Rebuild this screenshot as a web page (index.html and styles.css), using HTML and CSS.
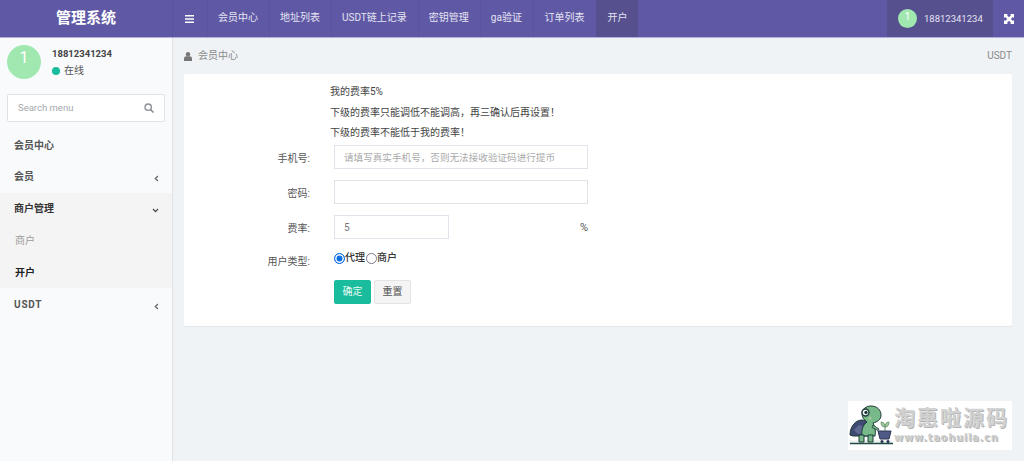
FILE: index.html
```html
<!DOCTYPE html>
<html lang="zh-CN">
<head>
<meta charset="utf-8">
<title>管理系统</title>
<link rel="stylesheet" href="styles.css">
</head>
<body>
<header class="topbar">
  <div class="brand">管理系统</div>
  <nav class="topnav">
    <a class="nav-item toggle"><svg width="10" height="8" viewBox="0 0 10 8"><path d="M0 0h9v1.600H0zM0 3.200h9v1.600H0zM0 6.400h9V8H0z" fill="#fff"/></svg></a>
    <a class="nav-item">会员中心</a>
    <a class="nav-item">地址列表</a>
    <a class="nav-item">USDT链上记录</a>
    <a class="nav-item">密钥管理</a>
    <a class="nav-item wide">ga验证</a>
    <a class="nav-item wide">订单列表</a>
    <a class="nav-item active">开户</a>
  </nav>
  <div class="top-right">
    <div class="user-menu"><span class="avatar-sm">1</span><span class="num">18812341234</span></div>
    <a class="expand"><svg width="10" height="10" viewBox="0 0 10 10"><path d="M0 0h4L2.900 1.100 5 3.200 7.100 1.100 6 0h4v4L8.900 2.900 6.800 5l2.100 2.100L10 6v4H6l1.100-1.100L5 6.800 2.900 8.900 4 10H0V6l1.100 1.100L3.200 5 1.100 2.900 0 4z" fill="#fff"/></svg></a>
  </div>
</header>
<div class="layout">
  <aside class="sidebar">
    <div class="user-panel">
      <div class="avatar-lg">1</div>
      <div class="user-info">
        <div class="user-name num">18812341234</div>
        <div class="user-status"><i class="dot"></i>在线</div>
      </div>
    </div>
    <div class="search">
      <span>Search menu</span>
      <svg width="10" height="10" viewBox="0 0 10 10"><circle cx="4.200" cy="4.200" r="3.200" fill="none" stroke="#8a8f95" stroke-width="1.300"/><path d="M6.600 6.600 9.500 9.500" stroke="#8a8f95" stroke-width="1.500"/></svg>
    </div>
    <ul class="menu">
      <li class="menu-row first"><span>会员中心</span></li>
      <li class="menu-row"><span>会员</span><svg class="chev" width="5" height="7" viewBox="0 0 5 7"><path d="M4 1 1.300 3.500 4 6" fill="none" stroke="#666" stroke-width="1.200"/></svg></li>
      <li class="menu-open">
        <div class="menu-row strong"><span>商户管理</span><svg class="chev" width="7" height="5" viewBox="0 0 7 5"><path d="M1 1 3.500 3.700 6 1" fill="none" stroke="#444" stroke-width="1.200"/></svg></div>
        <div class="sub">商户</div>
        <div class="sub current">开户</div>
      </li>
      <li class="menu-row"><span class="latin">USDT</span><svg class="chev" width="5" height="7" viewBox="0 0 5 7"><path d="M4 1 1.300 3.500 4 6" fill="none" stroke="#666" stroke-width="1.200"/></svg></li>
    </ul>
  </aside>
  <main class="content">
    <div class="crumbs">
      <span class="crumb"><svg width="8" height="9" viewBox="0 0 8 9"><circle cx="4" cy="2.200" r="2.200" fill="#777"/><path d="M0 9V6.500C0 5 1.200 4.300 2.200 4.300h3.600C6.800 4.300 8 5 8 6.500V9z" fill="#777"/></svg>会员中心</span>
      <span>USDT</span>
    </div>
    <section class="card">
      <div class="notes">
        <p>我的费率5%</p>
        <p>下级的费率只能调低不能调高，再三确认后再设置！</p>
        <p>下级的费率不能低于我的费率！</p>
      </div>
      <form class="form">
        <div class="label">手机号:</div>
        <div class="field"><input class="input" type="text" placeholder="请填写真实手机号，否则无法接收验证码进行提币"></div>
        <div class="label">密码:</div>
        <div class="field"><input class="input" type="text"></div>
        <div class="label">费率:</div>
        <div class="field rate"><input class="input short" type="text" value="5"><span class="pct">%</span></div>
        <div class="label type-label">用户类型:</div>
        <div class="field radios">
          <label class="radio-label"><span class="radio on"></span>代理</label>
          <label class="radio-label"><span class="radio"></span>商户</label>
        </div>
        <div></div>
        <div class="actions">
          <button class="btn primary" type="button">确定</button>
          <button class="btn" type="button">重置</button>
        </div>
      </form>
    </section>
  </main>
</div>
<div class="watermark">
  <svg class="wm-logo" width="46" height="44" viewBox="2 2 46 44">
    <path d="M3 38 L46 38 46 42 3 42z" fill="#eef2f0"/>
    <path d="M4 41.500h43" stroke="#1f4a45" stroke-width="1.500"/>
    <path d="M4 33c0-9 6-15 12-15 5 0 9 5 9 11l-3 5-15 0z" fill="#3f4a72" stroke="#1f3a3a" stroke-width="1"/>
    <path d="M8 28l5-5 6 2 0 6-7 1z" fill="#5f6a92"/>
    <path d="M16 34c-1-6 1-11 5-14-3-2-5-5-5-8 0-5 4-8 9-8 6 0 10 4 10 9 0 5-4 7-8 8 2 4 3 8 2 13z" fill="#78b98a" stroke="#1f3a3a" stroke-width="1"/>
    <circle cx="19.500" cy="10.500" r="3.500" fill="#fff" stroke="#1f3a3a" stroke-width="1.400"/>
    <circle cx="20" cy="10.500" r="1.700" fill="#1f3a3a"/>
    <circle cx="24" cy="16" r="1.500" fill="#a8c9a0"/>
    <path d="M27 23l6 4-1 1.500-6-3z" fill="#78b98a" stroke="#1f3a3a" stroke-width=".8"/>
    <path d="M13 33h5v7h-5zM22 33h5v7h-5z" fill="#78b98a" stroke="#1f3a3a" stroke-width="1"/>
    <path d="M32 29h13l-2 8H34z" fill="#4f5a86" stroke="#2c3454" stroke-width="1"/>
    <path d="M39 29v-4" stroke="#5f8f6a" stroke-width="1"/>
    <path d="M39 25c-3 0-4-2-4-5 3 0 4 2 4 5zM39 25c3 0 4-2 4-5-3 0-4 2-4 5z" fill="#a8c89a" stroke="#5f8f6a" stroke-width=".8"/>
    <circle cx="36" cy="39.500" r="1.500" fill="#2c3454"/><circle cx="42" cy="39.500" r="1.500" fill="#2c3454"/>
  </svg>
  <div class="wm-text">
    <div class="wm-cn">淘惠啦源码</div>
    <div class="wm-url">www.taohuila.cn</div>
  </div>
</div>
</body>
</html>
```
FILE: styles.css
```css
* { box-sizing: border-box; }
html, body { height: 100%; }
body {
  margin: 0;
  overflow: hidden;
  background: #eff3f6;
  color: #4a4a4a;
  font: 10px/1.4 Roboto, "Noto Sans CJK SC", sans-serif;
}
.num { font-size: 9.500px; }
.topbar {
  display: flex;
  height: 38px;
  background: #5f59a5;
  border-bottom: 1px solid #b3aedb;
  color: #e6e4f3;
}
.brand {
  width: 172px;
  flex: none;
  text-align: center;
  line-height: 37px;
  font-size: 15px;
  font-weight: 700;
  color: #fff;
}
.topnav { display: flex; height: 37px; }
.nav-item {
  display: flex;
  align-items: center;
  height: 37px;
  padding: 0 11px 1px 10px;
  border-left: 1px solid #5a549e;
  white-space: nowrap;
}
.toggle { padding: 0 12px; width: 35px; }
.wide { padding-right: 11.500px; }
.nav-item.wide + .wide { padding-right: 12px; }
.active { background: #56508f; padding-left: 11px; border-left: 0; }
.top-right { margin-left: auto; display: flex; }
.user-menu {
  display: flex;
  align-items: center;
  gap: 7px;
  width: 106px;
  padding-left: 11px;
  background: #56508f;
}
.avatar-sm {
  width: 19px;
  height: 19px;
  border-radius: 50%;
  background: #a0e8b0;
  color: #fff;
  text-align: center;
  line-height: 15px;
}
.expand { width: 31px; display: flex; align-items: center; justify-content: center; }
.layout { display: flex; height: 423px; }
.sidebar {
  width: 173px;
  flex: none;
  background: #f9fafc;
  border-right: 1px solid #dfe3e8;
}
.user-panel { display: flex; height: 56px; padding: 7px 0 0 7px; }
.avatar-lg {
  width: 34px;
  height: 34px;
  border-radius: 50%;
  background: #a0e8b0;
  color: #fff;
  font-size: 16px;
  text-align: center;
  line-height: 25px;
}
.user-info { margin-left: 11px; }
.user-name { font-weight: 700; color: #444; line-height: 17px; }
.user-status { display: flex; align-items: center; gap: 4px; line-height: 17px; font-size: 10px; color: #555; }
.dot { width: 8px; height: 8px; border-radius: 50%; background: #19bc9c; }
.search {
  display: flex;
  justify-content: space-between;
  align-items: center;
  width: 158px;
  height: 28px;
  margin-left: 7px;
  padding: 0 10px 0 10px;
  background: #fff;
  border: 1px solid #dfe3e8;
  border-radius: 2px;
  color: #a5a8ad;
  font-size: 9.500px;
}
.menu { list-style: none; margin: 7px 0 0; padding: 0; }
.menu-row {
  display: flex;
  justify-content: space-between;
  align-items: center;
  height: 32px;
  padding: 0 13px 1px 14px;
  font-weight: 600;
  color: #555;
}
.first { padding: 1px 13px 0 14px; }
.menu-open + .menu-row { padding-top: 1px; padding-bottom: 0; }
.menu .latin { letter-spacing: .8px; font-weight: 700; }
.chev { flex: none; margin-top: 3px; }
.menu-open { background: #f4f4f4; }
.strong { color: #333; font-weight: 700; }
.sub { height: 32px; line-height: 31px; padding-left: 15px; color: #9a9a9a; }
.sub.current { height: 31px; color: #222; font-weight: 700; }
.content { flex: 1; padding: 0 12px 0 11px; }
.crumbs {
  display: flex;
  justify-content: space-between;
  align-items: center;
  height: 36px;
  color: #8a8a8a;
}
.crumb { display: flex; align-items: center; gap: 6px; }
.card {
  height: 252px;
  background: #fff;
  border-radius: 2px;
  box-shadow: 0 1px 1px #e5e8ec;
  padding-top: 7px;
}
.notes { margin-left: 146px; color: #444; font-family: Roboto, "Noto Sans CJK TC", sans-serif; }
.notes p { margin: 0; height: 20.500px; line-height: 21px; }
.form {
  display: grid;
  grid-template-columns: 126px 254px;
  grid-template-rows: 35px 35px 35px 30px auto;
  column-gap: 24px;
  margin-top: 2.500px;
}
.label { text-align: right; line-height: 25px; color: #555; padding-top: 1px; }
.input {
  display: block;
  width: 100%;
  height: 24px;
  padding: 0 9px;
  border: 1px solid #dfe3ea;
  background: #fff;
  color: #777;
  font: inherit;
  outline: 0;
}
.input::placeholder { color: #aaa; font-size: 9.600px; font-family: Roboto, "Noto Sans CJK TC", sans-serif; }
.rate { display: flex; justify-content: space-between; align-items: flex-start; }
.short { width: 115px; }
.pct { line-height: 26px; color: #555; font-size: 11px; }
.type-label { padding-top: 0; line-height: 24px; }
.radios { display: flex; gap: 1px; margin-top: -2px; color: #333; font-weight: 500; }
.radio-label { display: flex; align-items: center; height: 20px; }
.radio { width: 11px; height: 11px; border: 1px solid #77778f; border-radius: 50%; background: #fff; }
.radio.on { border: 1.500px solid #0b6fe0; background: #0b6fe0; box-shadow: inset 0 0 0 1.500px #fff; }
.actions { display: flex; gap: 3px; }
.btn {
  width: 37px;
  height: 24px;
  padding: 0;
  border: 1px solid #e4e4e4;
  border-radius: 2px;
  background: #f4f4f4;
  color: #555;
  font: inherit;
}
.primary { background: #19bc9c; border-color: #19bc9c; color: #e8fbf6; }
.watermark {
  position: absolute;
  left: 848px;
  top: 401px;
  width: 164px;
  height: 49px;
  display: flex;
  align-items: center;
  background: #fff;
}
.wm-logo { flex: none; align-self: flex-start; margin-top: 3px; }
.wm-text { line-height: 1; }
.wm-cn {
  font-size: 21px;
  font-weight: 700;
  letter-spacing: 2px;
  color: #d2d2d2;
  text-shadow: 1px 1px 0 #b5b5b5;
  white-space: nowrap;
}
.wm-url {
  margin-top: 3px;
  font: 700 10px "DejaVu Sans", sans-serif;
  letter-spacing: .7px;
  color: #cfcfcf;
  text-shadow: 1px 1px 0 #b5b5b5;
  white-space: nowrap;
}
```
